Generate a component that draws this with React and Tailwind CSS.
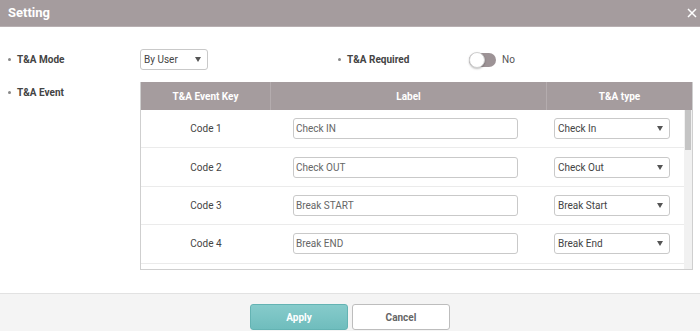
import React from "react";

const Caret = () => (
  <svg width="6" height="5" viewBox="0 0 6 5" className="shrink-0">
    <path d="M0 0 L6 0 L3 5 Z" fill="#555" />
  </svg>
);

const Dot = () => <span className="w-[3px] h-[3px] rounded-full bg-[#888] shrink-0" />;

const rows = [
  { key: "Code 1", label: "Check IN", type: "Check In" },
  { key: "Code 2", label: "Check OUT", type: "Check Out" },
  { key: "Code 3", label: "Break START", type: "Break Start" },
  { key: "Code 4", label: "Break END", type: "Break End" },
];

export default function App() {
  return (
    <div
      className="w-[700px] h-[331px] flex flex-col bg-white overflow-hidden text-[10px] text-[#333]"
      style={{ fontFamily: "Roboto, 'Liberation Sans', sans-serif" }}
    >
      {/* Header */}
      <div className="h-[27px] shrink-0 bg-[#a59c9e] border-b border-[#b8b0b2] flex items-center justify-between pl-[8px] pr-[3px]">
        <span className="text-white font-bold text-[13px]">Setting</span>
        <svg width="10" height="10" viewBox="0 0 10 10">
          <path d="M1 1 L9 9 M9 1 L1 9" stroke="#fff" strokeWidth="1.5" />
        </svg>
      </div>

      {/* Body */}
      <div className="flex-1 flex flex-col pt-[22px]">
        <div className="flex items-center h-[21px]">
          <div className="w-[140px] pl-[8px] flex items-center gap-[6px] font-bold text-[#444]">
            <Dot />
            <span>T&amp;A Mode</span>
          </div>
          <div className="w-[68px] h-[21px] border border-[#c9c9c9] rounded-[3px] flex items-center justify-between pl-[3px] pr-[6px] text-[#444]">
            <span>By User</span>
            <Caret />
          </div>
          <div className="w-[130px]" />
          <div className="w-[131px] flex items-center gap-[6px] font-bold text-[#444]">
            <Dot />
            <span>T&amp;A Required</span>
          </div>
          <div className="w-[27px] h-[14px] rounded-full bg-[#9d9396] relative">
            <div className="absolute left-0 top-[-1px] w-[16px] h-[16px] rounded-full bg-white border border-[#d0d0d0] shadow-[0_1px_2px_rgba(0,0,0,0.25)]" />
          </div>
          <span className="ml-[6px] text-[#555]">No</span>
        </div>

        <div className="flex mt-[12px]">
          <div className="w-[140px] pl-[8px] flex items-center h-[20px] gap-[6px] font-bold text-[#444]">
            <Dot />
            <span>T&amp;A Event</span>
          </div>
          <div className="w-[553px] h-[188px] border border-[#cfcfcf] border-t-0 flex flex-col">
            <div className="h-[28px] shrink-0 bg-[#a59c9e] flex text-white font-bold">
              <div className="w-[130px] flex items-center justify-center border-r border-[#b4acae]">T&amp;A Event Key</div>
              <div className="w-[276px] flex items-center justify-center border-r border-[#b4acae]">Label</div>
              <div className="flex-1 flex items-center justify-center">T&amp;A type</div>
            </div>
            <div className="flex-1 flex overflow-hidden">
              <div className="flex-1 flex flex-col">
                {rows.map((r) => (
                  <div key={r.key} className="h-[38.4px] shrink-0 flex items-center border-b border-[#ebebeb]">
                    <div className="w-[130px] text-center text-[#444]">{r.key}</div>
                    <div className="w-[276px] pl-[22px]">
                      <div className="w-[225px] h-[21px] border border-[#c9c9c9] rounded-[3px] flex items-center pl-[2px] text-[#666]">
                        {r.label}
                      </div>
                    </div>
                    <div className="flex-1 pl-[7px]">
                      <div className="w-[116px] h-[21px] border border-[#c9c9c9] rounded-[3px] flex items-center justify-between pl-[3px] pr-[6px] text-[#444]">
                        <span>{r.type}</span>
                        <Caret />
                      </div>
                    </div>
                  </div>
                ))}
              </div>
              <div className="w-[8px] bg-[#f1f1f1] flex flex-col">
                <div className="h-[40px] mx-[1px] bg-[#c4c4c4]" />
              </div>
            </div>
          </div>
        </div>
      </div>

      {/* Footer */}
      <div className="h-[38px] shrink-0 border-t border-[#e2e2e2] bg-[#f4f4f4] flex justify-center gap-[4px] pt-[10px]">
        <div className="w-[98px] h-[26px] rounded-[3px] border border-[#64b3b3] bg-gradient-to-b from-[#86cbcb] to-[#6fbdbd] flex items-center justify-center text-white font-bold">
          Apply
        </div>
        <div className="w-[98px] h-[26px] rounded-[3px] border border-[#bdbdbd] bg-white flex items-center justify-center text-[#666] font-bold">
          Cancel
        </div>
      </div>
    </div>
  );
}
